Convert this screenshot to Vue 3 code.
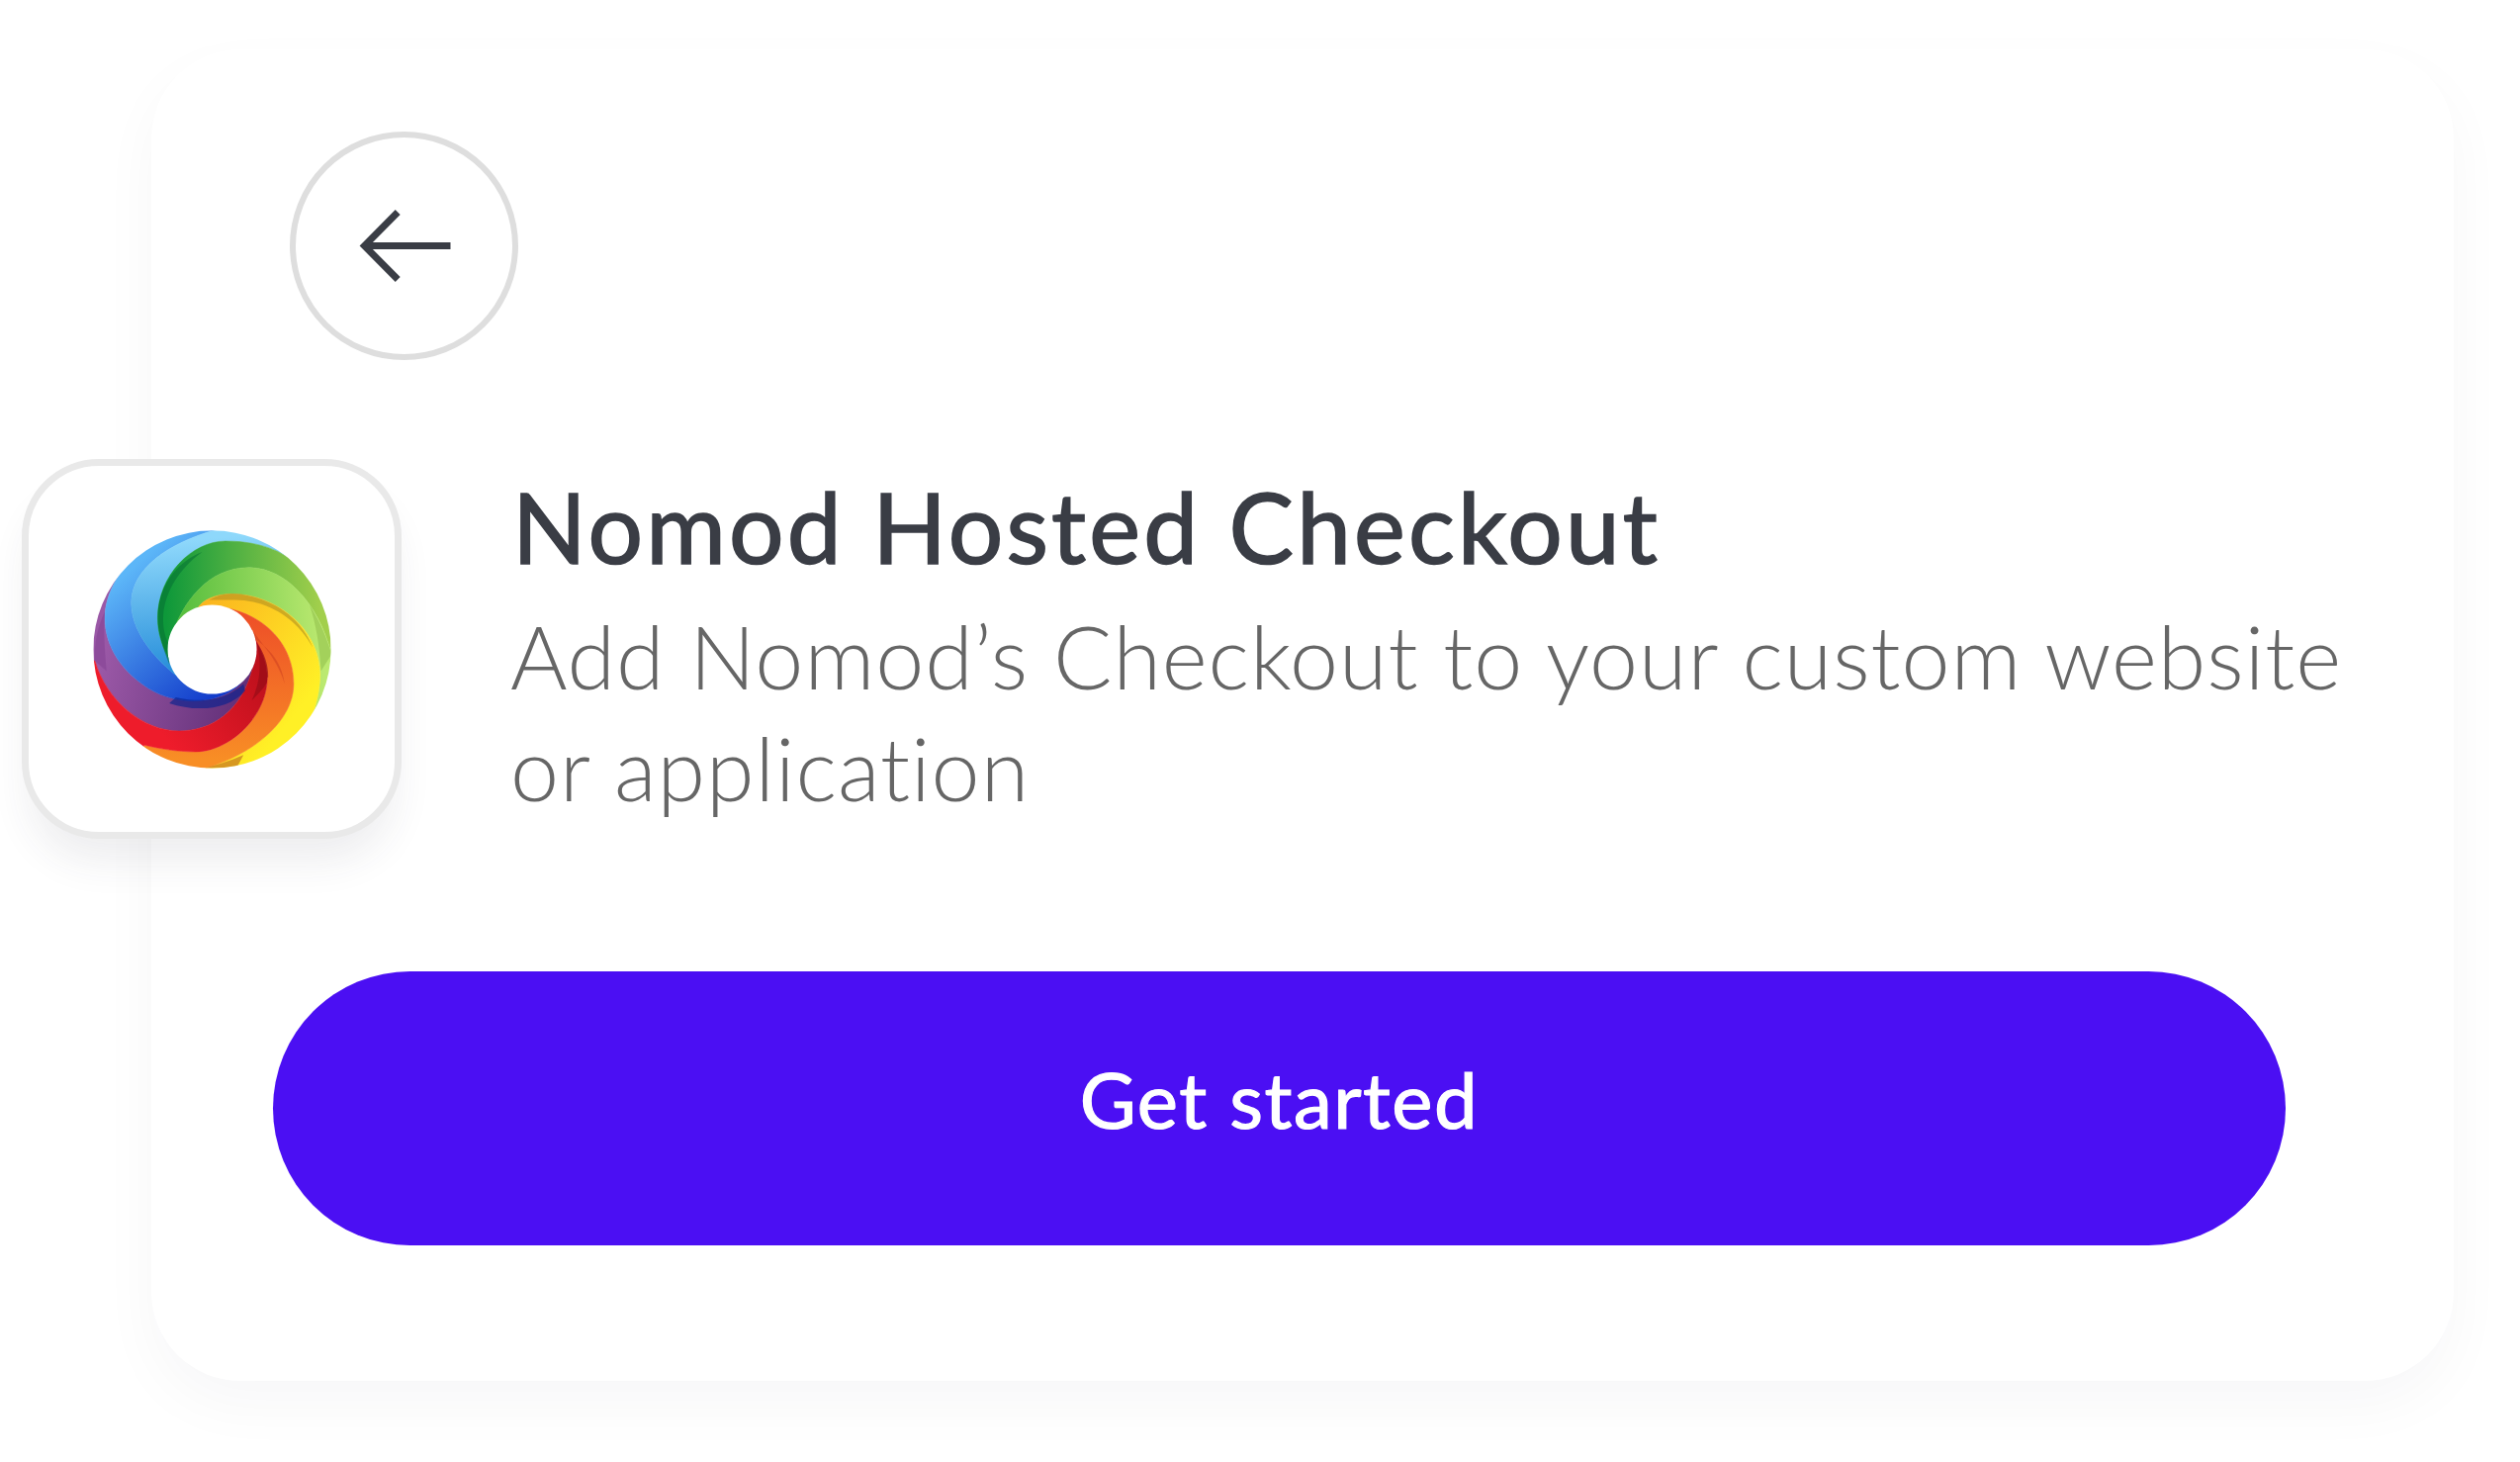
<template>
  <div class="page">
    <div class="card">
      <button class="back" aria-label="Back">
        <svg class="back-icon" width="96" height="76" viewBox="0 0 96 76">
          <path d="M41.2 3.5 7.5 37.5l33.7 34M7.5 37.5H94.5" fill="none" stroke="#3a3d45" stroke-width="7" />
        </svg>
      </button>

      <div class="intro">
        <div class="tile">
          <svg width="287" height="287" viewBox="0 5 860 860">
            <defs>
              <linearGradient
                v-for="b in bands"
                :key="b.id"
                :id="b.id"
                gradientUnits="userSpaceOnUse"
                :x1="b.from[0]"
                :y1="b.from[1]"
                :x2="b.to[0]"
                :y2="b.to[1]"
              >
                <stop offset="0" :stop-color="b.c1" />
                <stop offset="1" :stop-color="b.c2" />
              </linearGradient>
              <clipPath id="ring">
                <path clip-rule="evenodd" d="M70 435a360 360 0 1 0 720 0a360 360 0 1 0-720 0zM295 435a135 135 0 1 0 270 0a135 135 0 1 0-270 0z" />
              </clipPath>
            </defs>
            <g clip-path="url(#ring)">
              <path
                v-for="b in bands"
                :key="b.id"
                :d="b.d"
                :fill="`url(#${b.id})`"
                :stroke="`url(#${b.id})`"
                stroke-width="1.5"
              />
              <!-- darker edges where one band folds under the next -->
              <path d="M525 540C470 590 400 598 320 580L300 598C380 625 480 620 530 560Z" fill="#07228f" opacity=".65" />
              <path d="M265 340C265 380 280 430 300 480L310 440C285 400 280 370 282 330C288 260 330 190 400 140C320 170 265 250 265 340Z" fill="#066f33" opacity=".55" />
              <path d="M600 520C600 480 590 450 565 415C580 470 578 530 550 590C580 560 600 540 597 520Z" fill="#8f0b16" opacity=".6" />
              <path d="M420 285C450 268 480 262 520 268C620 285 700 340 735 430C690 345 600 285 500 285C470 285 445 285 420 285Z" fill="#a98a20" opacity=".55" />
              <path d="M555 400C600 430 640 470 650 540C630 470 590 430 520 335Z" fill="#c93c20" opacity=".5" />
              <path d="M410 795C440 785 480 775 525 755L505 792Z" fill="#b7561f" opacity=".55" />
              <path d="M725 300C750 340 775 390 792 450L760 500C755 420 745 360 725 300Z" fill="#8fbe4a" opacity=".55" />
              <path d="M75 470C72 420 82 370 105 320C100 380 105 440 110 500Z" fill="#7a3a8c" opacity=".4" />
            </g>
          </svg>
        </div>
        <div class="copy">
          <h1 class="title">Nomod Hosted Checkout</h1>
          <p class="desc">Add Nomod’s Checkout to your custom website or application</p>
        </div>
      </div>

      <button class="start">Get started</button>
    </div>
  </div>
</template>

<script setup>
// spiral edges of the logo, each running from the hole out past the rim
const edges = {
  purpleBlue: [[530, 522], [470, 605, 330, 610, 240, 555], [160, 505, 105, 430, 105, 340], [105, 290, 125, 245, 150, 205], [155, 195, 160, 185, 165, 175]],
  blueSky: [[375, 553], [290, 500, 185, 400, 185, 295], [185, 190, 300, 110, 445, 72], [450, 70, 455, 68, 460, 62]],
  skyGreen: [[308, 480], [280, 430, 265, 390, 265, 340], [265, 210, 370, 107, 470, 107], [540, 107, 600, 120, 650, 150], [660, 145, 670, 140, 680, 130]],
  greenLime: [[305, 400], [340, 290, 420, 187, 540, 187], [650, 187, 750, 290, 792, 450], [805, 450, 815, 450, 830, 450]],
  limeYellow: [[385, 312], [400, 285, 440, 267, 490, 267], [620, 267, 757, 370, 757, 510], [757, 560, 745, 610, 725, 655], [735, 660, 745, 665, 760, 675]],
  yellowOrange: [[465, 308], [590, 330, 677, 420, 677, 540], [677, 650, 560, 750, 410, 795], [410, 805, 410, 815, 410, 830]],
  orangeRed: [[555, 395], [590, 450, 597, 490, 597, 520], [597, 640, 480, 745, 380, 745], [320, 745, 270, 735, 225, 725], [215, 735, 205, 745, 190, 755]],
  redPurple: [[563, 440], [540, 610, 440, 682, 330, 682], [220, 682, 110, 590, 75, 470], [60, 470, 50, 470, 35, 470]],
}

function forward(edge) {
  const [start, ...segs] = edge
  return { start, text: segs.map((s) => `C${s.join(' ')}`).join('') }
}

function backward(edge) {
  const [start, ...segs] = edge
  let text = ''
  for (let i = segs.length - 1; i >= 0; i--) {
    const s = segs[i]
    const prev = i === 0 ? start : segs[i - 1].slice(4)
    text += `C${s[2]} ${s[3]} ${s[0]} ${s[1]} ${prev[0]} ${prev[1]}`
  }
  return text
}

function farPoint(p) {
  const a = Math.atan2(p[1] - 435, p[0] - 430)
  return `${430 + 800 * Math.cos(a)} ${435 + 800 * Math.sin(a)}`
}

// a band is the space between two edges, closed outside the rim and inside the hole
function band(a, b) {
  const first = forward(a)
  const endA = a[a.length - 1].slice(4)
  const endB = b[b.length - 1].slice(4)
  return `M${first.start.join(' ')}${first.text}L${farPoint(endA)}L${farPoint(endB)}L${endB.join(' ')}${backward(b)}L430 435Z`
}

const bands = [
  { id: 'b-purple', d: band(edges.redPurple, edges.purpleBlue), from: [90, 500], to: [560, 620], c1: '#9a58a6', c2: '#5d2c74' },
  { id: 'b-blue', d: band(edges.purpleBlue, edges.blueSky), from: [150, 220], to: [480, 600], c1: '#5cb6f8', c2: '#0b2fc6' },
  { id: 'b-sky', d: band(edges.blueSky, edges.skyGreen), from: [300, 110], to: [340, 540], c1: '#8ed8fb', c2: '#1c86d6' },
  { id: 'b-green', d: band(edges.skyGreen, edges.greenLime), from: [290, 300], to: [760, 300], c1: '#0e983a', c2: '#a2cf4c' },
  { id: 'b-lime', d: band(edges.greenLime, edges.limeYellow), from: [330, 350], to: [760, 330], c1: '#55bd3d', c2: '#bbe970' },
  { id: 'b-yellow', d: band(edges.limeYellow, edges.yellowOrange), from: [400, 290], to: [740, 560], c1: '#fbb41f', c2: '#fff026' },
  { id: 'b-orange', d: band(edges.yellowOrange, edges.orangeRed), from: [520, 340], to: [520, 770], c1: '#ee5128', c2: '#f88e25' },
  { id: 'b-red', d: band(edges.orangeRed, edges.redPurple), from: [590, 500], to: [300, 720], c1: '#bd101c', c2: '#ee1c2b' },
]
</script>

<style scoped>
.page {
  width: 2548px;
  height: 1478px;
  padding: 50px 0 0 153px;
  box-sizing: border-box;
  background: #fff;
  font-family: Lato, "Liberation Sans", sans-serif;
  overflow: hidden;
}

.card {
  width: 2328px;
  height: 1346px;
  padding: 83px 0 0 123px;
  box-sizing: border-box;
  background: #fff;
  border-radius: 90px;
  box-shadow: 0 24px 60px rgba(30, 30, 50, 0.035);
}

.back {
  display: flex;
  align-items: center;
  justify-content: center;
  width: 231px;
  height: 231px;
  margin-left: 17px;
  padding: 0;
  background: #fff;
  border: 6px solid #dedede;
  border-radius: 50%;
  box-sizing: border-box;
}

.back-icon {
  overflow: visible;
}

.intro {
  display: flex;
  gap: 112px;
  margin: 100px 0 0 -254px;
}

.tile {
  display: flex;
  align-items: center;
  justify-content: center;
  flex: none;
  width: 384px;
  height: 384px;
  background: #fff;
  border: 7px solid #e9e9e9;
  border-radius: 78px;
  box-sizing: border-box;
  box-shadow: 0 30px 40px -8px rgba(50, 50, 80, 0.09);
}

.copy {
  width: 1900px;
  padding-top: 12px;
}

.title {
  margin: 0;
  font-size: 98px;
  font-weight: 400;
  letter-spacing: 3.2px;
  line-height: 112px;
  color: #3a3d45;
  -webkit-text-stroke: 1.6px #3a3d45;
}

.desc {
  margin: 19px 0 0 -2px;
  font-size: 88px;
  font-weight: 300;
  letter-spacing: 0.95px;
  line-height: 113px;
  color: #666;
}

.start {
  display: block;
  width: 2035px;
  height: 277px;
  margin-top: 134px;
  padding: 0 0 20px;
  background: #4b0ff3;
  border: none;
  border-radius: 139px;
  color: #fff;
  font-family: inherit;
  font-size: 78px;
  font-weight: 400;
  letter-spacing: 1.5px;
  -webkit-text-stroke: 1.2px #fff;
}
</style>

<style>
html, body {
  margin: 0;
  background: #fff;
}
</style>
